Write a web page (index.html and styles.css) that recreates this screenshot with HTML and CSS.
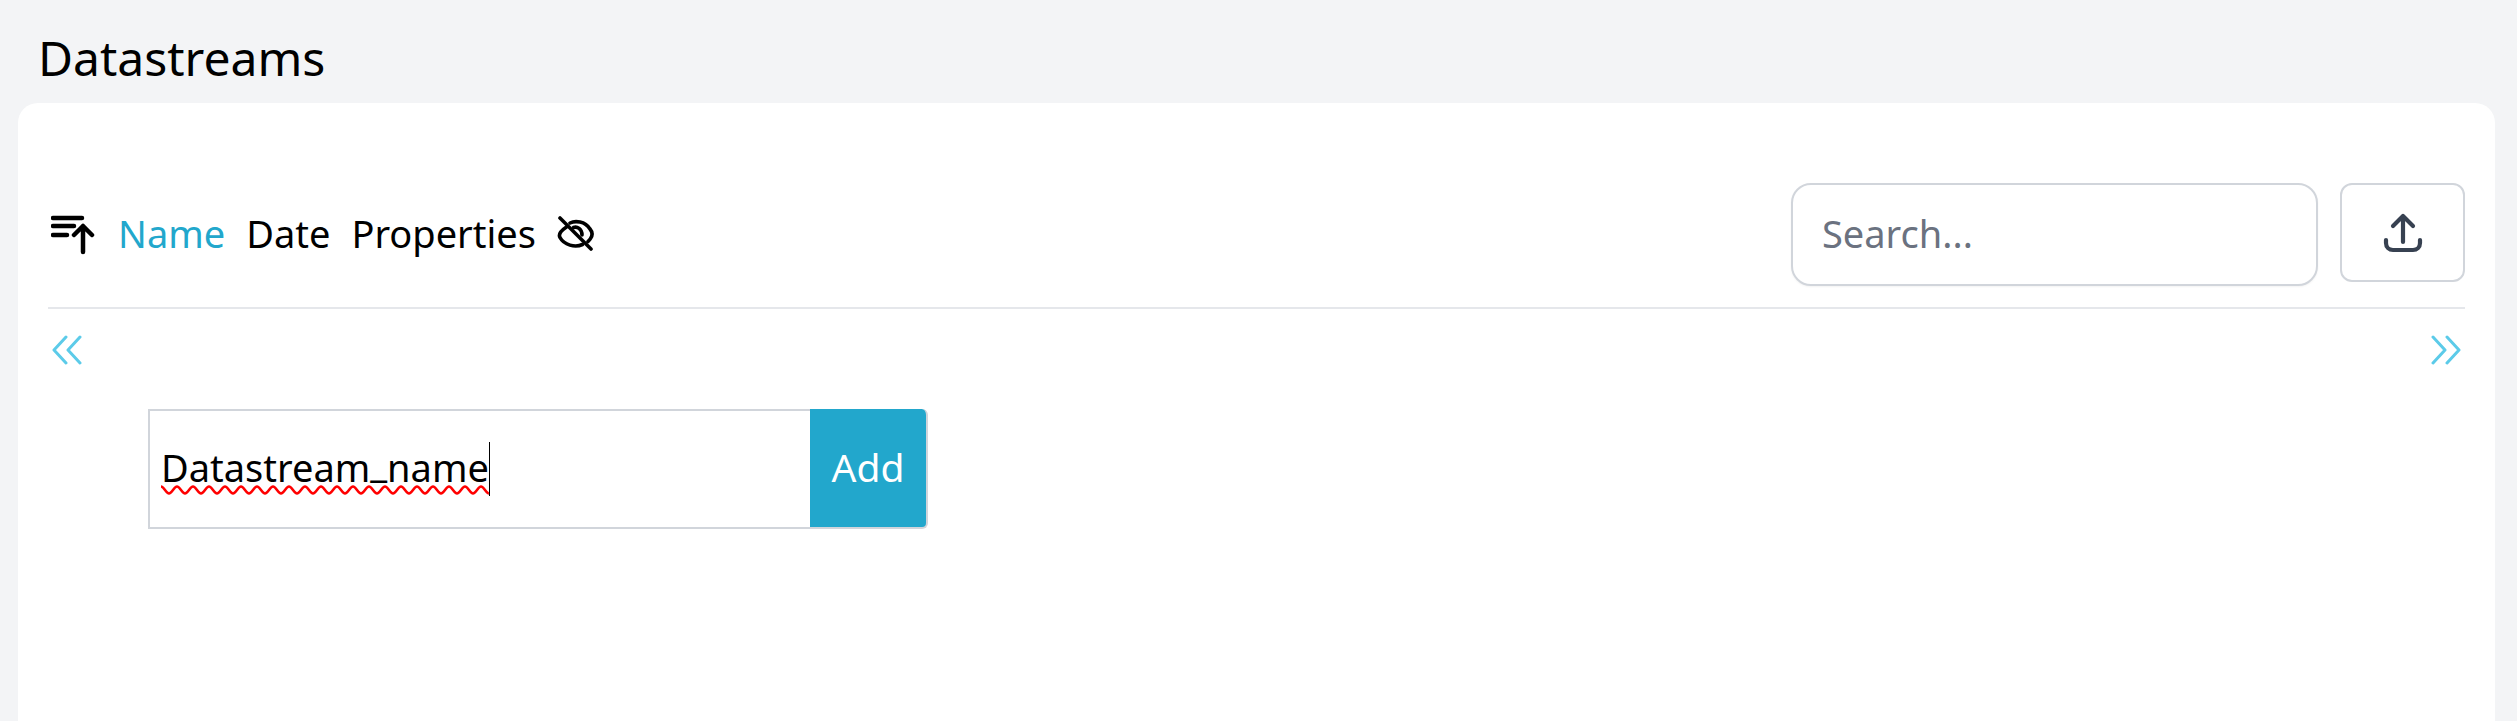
FILE: index.html
```html
<!DOCTYPE html>
<html lang="en">
<head>
<meta charset="utf-8">
<title>Datastreams</title>
<link rel="stylesheet" href="styles.css">
</head>
<body>
<h1 class="page-title">Datastreams</h1>
<main class="card">
  <div class="toolbar">
    <div class="sort">
      <svg class="icon-sort" width="44" height="40" viewBox="0 0 44 40" fill="none" stroke="#000" stroke-width="4.500" stroke-linecap="round" stroke-linejoin="round">
        <path d="M2 3H31M2 11H23M2 20H16M32 37V11M23 20L32 11L41 20"/>
      </svg>
      <span class="sort-item active">Name</span>
      <span class="sort-item">Date</span>
      <span class="sort-item">Properties</span>
      <svg class="icon-eye" width="38" height="36" viewBox="0 0 38 36" fill="none" stroke="#000" stroke-width="3.600" stroke-linecap="round" stroke-linejoin="round">
        <path d="M3 2L34 33"/>
        <path d="M13 7C18 4.500 28 5 33 13C35.500 16 36 19 33.500 22.500C33 23.500 32 24.500 31 25.500"/>
        <path d="M9.500 11C5 14 1 18 3 21.500C7 29 18 32 25.500 28.500"/>
        <path d="M16.500 11.500C20 10 25 13 25 19"/>
      </svg>
    </div>
    <div class="actions">
      <input class="search" type="text" placeholder="Search...">
      <button class="upload" type="button" aria-label="Upload">
        <svg width="40" height="42" viewBox="0 0 40 42" fill="none" stroke="#374151" stroke-width="4.200" stroke-linecap="round" stroke-linejoin="round">
          <path d="M20 30V4M10 14L20 4L30 14"/>
          <path d="M3 28V31C3 35 6 38 10 38H30C34 38 37 35 37 31V28"/>
        </svg>
      </button>
    </div>
  </div>
  <hr class="divider">
  <div class="pager">
    <svg width="30" height="30" viewBox="0 0 30 30" fill="none" stroke="#5ccbe9" stroke-width="3" stroke-linecap="round" stroke-linejoin="round">
      <path d="M14 2L2 15L14 28M28 2L16 15L28 28"/>
    </svg>
    <svg width="30" height="30" viewBox="0 0 30 30" fill="none" stroke="#5ccbe9" stroke-width="3" stroke-linecap="round" stroke-linejoin="round">
      <path d="M2 2L14 15L2 28M16 2L28 15L16 28"/>
    </svg>
  </div>
  <form class="add-form">
    <div class="name-field">
      <span class="name-text">Datastream<span class="underscore">_</span>name
        <svg class="squiggle" width="100%" height="10">
          <defs>
            <pattern id="wave" width="16" height="10" patternUnits="userSpaceOnUse">
              <path d="M0 1.500C3 1.500 5 8.500 8 8.500C11 8.500 13 1.500 16 1.500" fill="none" stroke="#f00" stroke-width="2.500"/>
            </pattern>
          </defs>
          <rect width="100%" height="10" fill="url(#wave)"/>
        </svg>
      </span><span class="caret"></span>
    </div>
    <button class="add-btn" type="button">Add</button>
  </form>
</main>
</body>
</html>
```

FILE: styles.css
```css
* { box-sizing: border-box; }
html, body { height: 721px; overflow: hidden; }
body {
  margin: 0;
  background: #f3f4f6;
  font-family: "Noto Sans", "Lato", sans-serif;
  color: #000;
  display: flex;
  flex-direction: column;
}
.page-title {
  margin: 0;
  padding: 26px 0 0 38px;
  height: 103px;
  font-size: 48px;
  line-height: 64px;
  font-weight: 400;
}
.card {
  flex: 1;
  margin: 0 22px 0 18px;
  padding: 80px 30px 0;
  background: #fff;
  border-radius: 20px 20px 0 0;
}
.toolbar {
  display: flex;
  justify-content: space-between;
  align-items: flex-start;
  height: 124px;
}
.sort {
  display: flex;
  align-items: center;
  height: 103px;
  padding-left: 3px;
  font-size: 38px;
}
.icon-sort { margin: 1px 23px 0 0; }
.sort-item { margin-right: 21px; padding-bottom: 4px; line-height: 50px; }
.sort-item.active { color: #22a7cc; }
.icon-eye { margin-top: -2px; }
.actions { display: flex; gap: 22px; align-items: flex-start; }
.search {
  width: 527px;
  height: 103px;
  padding: 0 29px 4px;
  border: 2px solid #d1d5db;
  border-radius: 20px;
  background: #fff;
  box-shadow: 0 1px 2px rgba(0, 0, 0, .05);
  font: 38px "Noto Sans", "Lato", sans-serif;
  color: #111827;
  outline: none;
}
.search::placeholder { color: #6b7280; opacity: 1; }
.upload {
  display: flex;
  align-items: center;
  justify-content: center;
  width: 125px;
  height: 99px;
  padding: 0;
  border: 2px solid #d1d5db;
  border-radius: 12px;
  background: #fff;
}
.divider {
  margin: 0;
  height: 2px;
  border: 0;
  background: #e5e7eb;
}
.pager {
  display: flex;
  justify-content: space-between;
  padding: 26px 4px 0;
  height: 100px;
}
.add-form {
  display: flex;
  width: 780px;
  height: 120px;
  margin-left: 100px;
}
.name-field {
  flex: 1;
  display: flex;
  align-items: center;
  padding-left: 11px;
  border: 2px solid #d1d5db;
  border-right: 0;
  background: #fff;
  font-size: 38px;
}
.name-text {
  position: relative;
  margin-bottom: 4px;
  line-height: 50px;
}
.underscore {
  position: relative;
  top: -5px;
}
.squiggle {
  position: absolute;
  left: 0;
  top: 43px;
  display: block;
}
.caret {
  width: 1px;
  height: 54px;
  background: #000;
}
.add-btn {
  width: 118px;
  padding: 0 0 4px;
  border: 0;
  border-right: 2px solid #d1d5db;
  border-bottom: 2px solid #d1d5db;
  border-radius: 0 6px 6px 0;
  background: #22a7cc;
  color: #fff;
  font: 39px "Noto Sans", "Lato", sans-serif;
}
```
